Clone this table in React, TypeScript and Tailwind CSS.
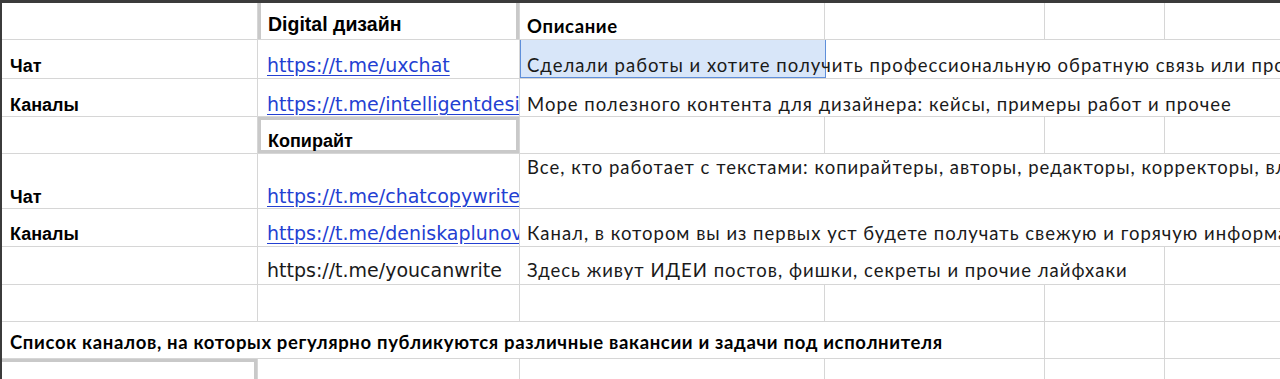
const line = 'border-[#d6d6d6]'

const labelCls = "font-['Liberation_Sans',sans-serif] font-bold text-[18px] leading-none text-black whitespace-nowrap"
const linkCls = "font-['DejaVu_Sans',sans-serif] text-[19px] leading-none text-[#2340d2] underline underline-offset-[3px] whitespace-nowrap"
const noteBase = "font-['Lato','Noto_Sans',sans-serif] text-[18.5px] leading-none whitespace-nowrap"
const noteCls = `${noteBase} tracking-[1px] text-[#1a1a1a]`
const noteBold = `${noteBase} font-bold tracking-[0.65px] text-black`

function Cell({
  children,
  className = '',
  span = '',
  noRight = false,
}: {
  children?: React.ReactNode
  className?: string
  span?: string
  noRight?: boolean
}) {
  return (
    <div
      className={`relative flex items-end overflow-hidden border-b ${line} ${
        noRight ? '' : 'border-r'
      } ${span} ${className}`}
    >
      {children}
    </div>
  )
}

export default function App() {
  return (
    <div className="w-[1280px] h-[379px] overflow-hidden bg-white border-t-[3px] border-l-[2px] border-[#3b3b3b]">
      <div className="grid grid-cols-[256px_262px_305px_220px_120px_1fr] grid-rows-[37px_39px_38px_37px_55px_38px_38px_37px_37px_40px]">
        {/* row 1 */}
        <Cell />
        <Cell className="shadow-[inset_3px_0_0_#c9c9c9,inset_-3px_0_0_#c9c9c9] pl-[10px] pb-[5px]">
          <span className="font-['Liberation_Sans',sans-serif] font-bold text-[19.5px] leading-none text-black whitespace-nowrap">
            Digital дизайн
          </span>
        </Cell>
        <Cell className="pl-[7px] pb-[4px]">
          <span className={noteBold}>Описание</span>
        </Cell>
        <Cell />
        <Cell />
        <Cell noRight />

        {/* row 2 */}
        <Cell className="pl-[8px] pb-[3px]">
          <span className={labelCls}>Чат</span>
        </Cell>
        <Cell className="pl-[9px] pb-[3px]">
          <span className={linkCls}>https://t.me/uxchat</span>
        </Cell>
        <Cell span="col-span-4" noRight className="pl-[7px] pb-[4px]">
          <div className="absolute left-0 top-[-1px] w-[306px] h-[39px] bg-[#d8e6f9] border border-[#5f8fda]" />
          <span className={`${noteCls} relative`}>
            Сделали работы и хотите получить профессиональную обратную связь или просто поделиться опытом
          </span>
        </Cell>

        {/* row 3 */}
        <Cell className="pl-[8px] pb-[2px]">
          <span className={labelCls}>Каналы</span>
        </Cell>
        <Cell className="pl-[9px] pb-[2px]">
          <span className={linkCls}>https://t.me/intelligentdesign</span>
        </Cell>
        <Cell span="col-span-4" noRight className="pl-[7px] pb-[3px]">
          <span className={noteCls}>
            Море полезного контента для дизайнера: кейсы, примеры работ и прочее
          </span>
        </Cell>

        {/* row 4 */}
        <Cell />
        <Cell className="shadow-[inset_0_0_0_3px_#c9c9c9] pl-[10px] pb-[3px]">
          <span className={labelCls}>Копирайт</span>
        </Cell>
        <Cell />
        <Cell />
        <Cell />
        <Cell noRight />

        {/* row 5 */}
        <Cell className="pl-[8px] pb-[2px]">
          <span className={labelCls}>Чат</span>
        </Cell>
        <Cell className="pl-[9px] pb-[2px]">
          <span className={linkCls}>https://t.me/chatcopywriters</span>
        </Cell>
        <Cell span="col-span-4" noRight className="!items-start pl-[7px] pt-[4px]">
          <span className={noteCls}>
            Все, кто работает с текстами: копирайтеры, авторы, редакторы, корректоры, владельцы блогов
          </span>
        </Cell>

        {/* row 6 */}
        <Cell className="pl-[8px] pb-[3px]">
          <span className={labelCls}>Каналы</span>
        </Cell>
        <Cell className="pl-[9px] pb-[3px]">
          <span className={linkCls}>https://t.me/deniskaplunov</span>
        </Cell>
        <Cell span="col-span-4" noRight className="pl-[7px] pb-[4px]">
          <span className={noteCls}>
            Канал, в котором вы из первых уст будете получать свежую и горячую информацию
          </span>
        </Cell>

        {/* row 7 */}
        <Cell />
        <Cell className="pl-[9px] pb-[4px]">
          <span className="font-['DejaVu_Sans',sans-serif] text-[19px] leading-none text-[#1a1a1a] whitespace-nowrap">
            https://t.me/youcanwrite
          </span>
        </Cell>
        <Cell span="col-span-3" className="pl-[7px] pb-[5px]">
          <span className={noteCls}>
            Здесь живут ИДЕИ постов, фишки, секреты и прочие лайфхаки
          </span>
        </Cell>
        <Cell noRight />

        {/* row 8 */}
        <Cell />
        <Cell />
        <Cell />
        <Cell />
        <Cell />
        <Cell noRight />

        {/* row 9 */}
        <Cell span="col-span-4" className="pl-[8px] pb-[7px]">
          <span className={noteBold}>
            Список каналов, на которых регулярно публикуются различные вакансии и задачи под исполнителя
          </span>
        </Cell>
        <Cell />
        <Cell noRight />

        {/* row 10 */}
        <Cell className="shadow-[inset_0_3px_0_#c9c9c9,inset_-3px_0_0_#c9c9c9]" />
        <Cell />
        <Cell />
        <Cell />
        <Cell />
        <Cell noRight />
      </div>
    </div>
  )
}
